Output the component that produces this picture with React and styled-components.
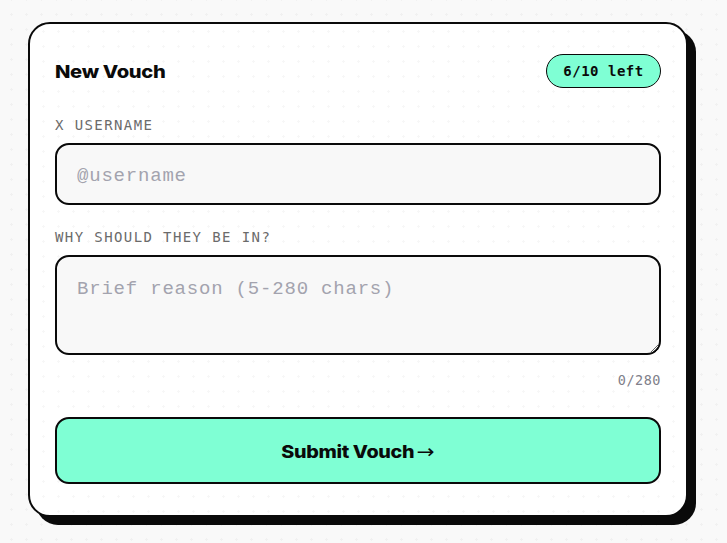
import React, { useState } from 'react';
import styled, { createGlobalStyle } from 'styled-components';

const dots = `radial-gradient(circle, rgba(0,0,0,0.03) 1px, transparent 1.2px)`;

const GlobalStyle = createGlobalStyle`
  html, body {
    margin: 0;
    padding: 0;
    background-color: #f9f9f9;
    background-image: ${dots};
    background-size: 15px 15px;
    background-position: 4px 7px;
  }
  * { box-sizing: border-box; }
`;

const Page = styled.div`
  min-height: 543px;
  padding: 22px 0 0 28px;
`;

const Card = styled.form`
  width: 660px;
  background-color: #ffffff;
  background-image: ${dots};
  background-size: 15px 15px;
  background-position: -24px -15px;
  border: 2px solid #0a0a0a;
  border-radius: 22px;
  box-shadow: 8px 8px 0 #0a0a0a;
  padding: 30px 25px 31px 25px;
  display: flex;
  flex-direction: column;
`;

const Header = styled.div`
  display: flex;
  justify-content: space-between;
  align-items: center;
  margin-bottom: 29px;
`;

const Title = styled.h2`
  margin: 0;
  font-family: Inter, "Liberation Sans", sans-serif;
  font-size: 18px;
  font-weight: 800;
  letter-spacing: -0.3px;
  transform: scaleX(1.12);
  transform-origin: left center;
  color: #0a0a0a;
`;

const Badge = styled.span`
  display: inline-flex;
  align-items: center;
  justify-content: center;
  height: 34px;
  width: 115px;
  border: 1.5px solid #0a0a0a;
  border-radius: 17px;
  background: #7fffd4;
  font-family: "DejaVu Sans Mono", "Liberation Mono", monospace;
  font-weight: 700;
  font-size: 14px;
  letter-spacing: 0.5px;
  color: #0a0a0a;
`;

const Label = styled.label`
  display: block;
  font-family: "DejaVu Sans Mono", "Liberation Mono", monospace;
  font-size: 14px;
  letter-spacing: 1.4px;
  color: #6b6b6b;
  margin-bottom: 10px;
`;

const fieldStyles = `
  width: 100%;
  border: 2px solid #0a0a0a;
  border-radius: 14px;
  background: #f8f8f8;
  font-family: "Liberation Mono", "DejaVu Sans Mono", monospace;
  font-size: 19px;
  letter-spacing: 0.8px;
  color: #0a0a0a;
  padding: 0 20px;
  outline: none;
  &::placeholder { color: #a3a3ae; }
`;

const Input = styled.input`
  ${fieldStyles}
  height: 62px;
  padding-top: 3px;
  margin-bottom: 24px;
`;

const TextArea = styled.textarea`
  ${fieldStyles}
  display: block;
  height: 100px;
  padding-top: 21px;
  resize: vertical;
`;

const Counter = styled.div`
  text-align: right;
  font-family: "DejaVu Sans Mono", "Liberation Mono", monospace;
  font-size: 13.5px;
  letter-spacing: 0.5px;
  color: #80808a;
  margin: 17px 0 29px;
`;

const SubmitButton = styled.button`
  height: 67px;
  width: 100%;
  border: 2px solid #0a0a0a;
  border-radius: 14px;
  background: #7fffd4;
  font-family: Inter, "Liberation Sans", sans-serif;
  font-size: 17.5px;
  font-weight: 800;
  letter-spacing: -0.3px;
  color: #0a0a0a;
  cursor: pointer;
  display: flex;
  align-items: center;
  justify-content: center;
`;

const ButtonText = styled.span`
  display: inline-block;
  transform: scaleX(1.13);
`;

const Arrow = styled.span`
  font-family: "DejaVu Sans", sans-serif;
  font-weight: 400;
  font-size: 19px;
  margin-left: 2px;
`;

export default function App() {
  const [reason, setReason] = useState('');
  return (
    <>
      <GlobalStyle />
      <Page>
        <Card onSubmit={(e) => e.preventDefault()}>
          <Header>
            <Title>New Vouch</Title>
            <Badge>6/10 left</Badge>
          </Header>
          <Label htmlFor="username">X USERNAME</Label>
          <Input id="username" placeholder="@username" />
          <Label htmlFor="reason">WHY SHOULD THEY BE IN?</Label>
          <TextArea
            id="reason"
            placeholder="Brief reason (5-280 chars)"
            value={reason}
            onChange={(e) => setReason(e.target.value)}
          />
          <Counter>{reason.length}/280</Counter>
          <SubmitButton type="submit">
            <ButtonText>
              Submit Vouch<Arrow>→</Arrow>
            </ButtonText>
          </SubmitButton>
        </Card>
      </Page>
    </>
  );
}
